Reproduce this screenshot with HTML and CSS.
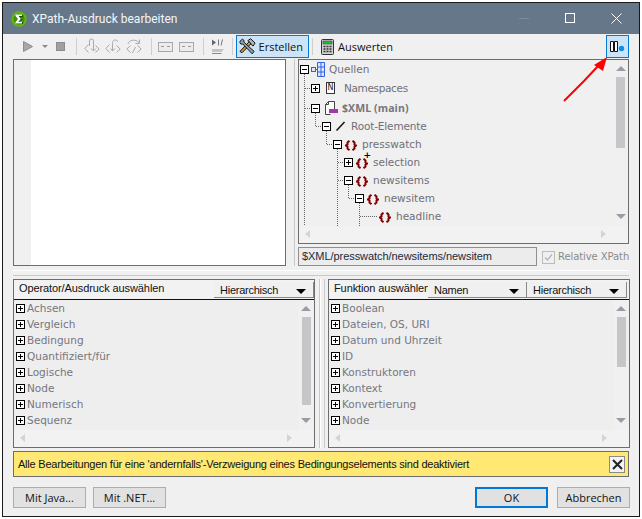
FILE: index.html
```html
<!DOCTYPE html>
<html lang="de">
<head>
<meta charset="utf-8">
<title>XPath-Ausdruck bearbeiten</title>
<link rel="stylesheet" href="styles.css">
</head>
<body>
<div class="window">
  <header class="titlebar">
    <svg class="logo" width="16" height="16" viewBox="0 0 16 16"><circle cx="8" cy="8" r="7.700" fill="#5fb80f"/><circle cx="8" cy="8" r="5.500" fill="#3f8f10"/><path d="M4.500 3.500h7v2H8.500l2 2.500-2.500 2.500h3.500v2h-7v-1.500L7.500 8 4.500 5z" fill="#1d4a08" transform="translate(.6 .4)"/><path d="M4.500 3.500h6.500v1.600H7.600l2.300 2.900-2.600 2.700H11v1.800H4.500v-1.300L7 8 4.500 5z" fill="#fff"/></svg>
    <span class="title">XPath-Ausdruck bearbeiten</span>
    <span class="wbtn"><svg width="11" height="11" viewBox="0 0 11 11"><path d="M0 5.500h10" stroke="#7d8b9c" fill="none"/></svg></span>
    <span class="wbtn"><svg width="11" height="11" viewBox="0 0 11 11"><rect x=".5" y=".5" width="9" height="9" fill="none" stroke="#fff"/></svg></span>
    <span class="wbtn"><svg width="11" height="11" viewBox="0 0 11 11"><path d="M.5.500l10 10M10.500.500l-10 10" stroke="#fff" fill="none"/></svg></span>
  </header>

  <div class="toolbar">
    <svg class="tb play" width="11" height="11" viewBox="0 0 11 11"><path d="M.5.500l9 5-9 5z" fill="#a8a8a8" stroke="#8d8d8d"/></svg>
    <svg class="tb caret" width="6" height="4" viewBox="0 0 6 4"><path d="M0 0h6L3 3z" fill="#8a8a8a"/></svg>
    <span class="stop"></span>
    <i class="sep s1"></i>
    <svg class="tb step" width="16" height="17" viewBox="0 0 16 17"><path d="M4.500 6.500L.8 10.500l3.700 4M11.500 7.500l3.700 3.500-3.700 3.500M5.500 8V3a2 2 0 0 1 4 0V12.500M7 10.500l2.500 2.500 2.500-2.500" fill="none" stroke="#a9a9a9"/></svg>
    <svg class="tb step" width="16" height="17" viewBox="0 0 16 17"><path d="M4.500 6.500L.8 10.500l3.700 4M11.500 7.500l3.700 3.500-3.700 3.500M13 3.500C10 .5 7.500 2 7.500 5.500V13M5.500 10.500l2 2.500 2.500-2.500" fill="none" stroke="#a9a9a9"/></svg>
    <svg class="tb step" width="16" height="17" viewBox="0 0 16 17"><path d="M4.500 7.500L.8 11l3.700 3.500M11.500 7.500l3.700 3.500-3.700 3.500M2 6C3 1.500 10 1 13 4.500M13.500 1.500V5.500H9.500M6.500 15l3-6" fill="none" stroke="#a9a9a9"/></svg>
    <i class="sep s2"></i>
    <span class="field-ic"><b></b></span>
    <span class="field-ic second"><b></b></span>
    <i class="sep s3"></i>
    <svg class="tb ppi" width="12" height="16" viewBox="0 0 12 16"><path d="M0 .5l4 3-4 3z" fill="#666"/><path d="M6.500 .5v6M10.500 .5l-1.500 6" stroke="#777" fill="none"/><path d="M0 10h12l-2.500 3H0z" fill="#c4c4c4"/><path d="M0 14.500h9.500" stroke="#8a8a8a"/></svg>
    <i class="sep s4"></i>
    <button class="tool active">
      <svg width="17" height="17" viewBox="0 0 17 17"><path d="M12.500 5.500L3 15l-2-1.500 9.500-10z" fill="#e08a2a" stroke="#111"/><path d="M9 2.500l3-2 4.500 4.500-2 3-1.500-1-1.500-2.500z" fill="#a9b6c2" stroke="#111"/><path d="M1.500 2.500l2-1.500 1.500 1v2L15.500 13.500 13.500 16 4 6H2L.800 4.500z" fill="#8fa0b0" stroke="#111"/></svg>
      Erstellen
    </button>
    <i class="sep s5"></i>
    <button class="tool plain">
      <svg width="13" height="16" viewBox="0 0 13 16"><rect x=".5" y=".5" width="12" height="15" rx="1" fill="#cfcfcf" stroke="#333"/><rect x="2" y="2" width="9" height="3" fill="#22c03a" stroke="#333" stroke-width=".5"/><path d="M2.500 7.500h2M5.500 7.500h2M8.500 7.500h2M2.500 10h2M5.500 10h2M8.500 10h2M2.500 12.500h2M5.500 12.500h2M8.500 12.500h2" stroke="#333" stroke-width="1.400"/></svg>
      Auswerten
    </button>
    <button class="toggle">
      <svg width="15" height="11" viewBox="0 0 15 11"><path d="M.5.500h3v10h-3zM4.500 .500h3v10h-3z" fill="#fff" stroke="#111"/><circle cx="11.500" cy="7.500" r="2.700" fill="#0f8fe0"/></svg>
    </button>
  </div>

  <section class="top">
    <div class="editor"><div class="gutter"></div><div class="code"></div></div>
    <div class="splitter-v"></div>
    <div class="right-col">
      <div class="tree-panel">
        <div class="tree-body">
          <svg class="tree-lines" width="100" height="166" viewBox="0 0 100 166">
            <path d="M5.500 14V166M6 28.500H12M6 48.500H12M16.500 53V66.500M17 66.500H23M27.500 71V84.500M28 84.500H34M38.500 89V166M39 102.500H45M39 120.500H45M49.500 125V138.500M50 138.500H56M60.500 143V166M61 156.500H78" fill="none" stroke="#666" stroke-dasharray="1 1"/>
          </svg>
          <div class="row d0"><span class="box minus"></span><svg class="ic" width="14" height="15" viewBox="0 0 14 15"><path d="M6.500.5h7v14h-7z" fill="#dbe6ff" stroke="#2f63e0"/><path d="M6.500 5h7M6.500 10h7M10 .5v14" stroke="#2f63e0"/><rect x=".5" y="5.500" width="4" height="4" fill="#dbe6ff" stroke="#2f63e0"/><path d="M4.500 7.500h2" stroke="#2f63e0"/></svg><span class="lbl q">Quellen</span></div>
          <div class="row d1 ns"><span class="box plus"></span><span class="n-ic">N</span><span class="lbl">Namespaces</span></div>
          <div class="row d1 xml"><span class="box minus"></span><svg class="ic" width="14" height="14" viewBox="0 0 14 14"><path d="M1.500 13.500V3.500L4.500.5h6v7.500M1.500 13.500h5" fill="#fff" stroke="#444"/><path d="M4.500.5v3h-3" fill="none" stroke="#444"/><rect x="5" y="8" width="9" height="4" fill="#a838a8"/></svg><span class="lbl strong">$XML (main)</span></div>
          <div class="row d2 rootel"><span class="box minus"></span><svg class="ic" width="10" height="10" viewBox="0 0 10 10"><path d="M.5 9.500l8-8.500" stroke="#111" stroke-width="1.500" fill="none"/></svg><span class="lbl">Root-Elemente</span></div>
          <div class="row d3"><span class="box minus"></span><span class="el"><svg width="12" height="11" viewBox="0 0 12 11"><use href="#brace"/></svg></span><span class="lbl">presswatch</span></div>
          <div class="row d4"><span class="box plus"></span><span class="el star"><svg width="12" height="11" viewBox="0 0 12 11"><use href="#brace"/></svg></span><span class="lbl">selection</span></div>
          <div class="row d4"><span class="box minus"></span><span class="el"><svg width="12" height="11" viewBox="0 0 12 11"><use href="#brace"/></svg></span><span class="lbl">newsitems</span></div>
          <div class="row d5"><span class="box minus"></span><span class="el"><svg width="12" height="11" viewBox="0 0 12 11"><use href="#brace"/></svg></span><span class="lbl">newsitem</span></div>
          <div class="row d6"><span class="el"><svg width="12" height="11" viewBox="0 0 12 11"><use href="#brace"/></svg></span><span class="lbl">headline</span></div>
        </div>
        <div class="vscroll tall"><i class="up"></i><b class="thumb t-tree"></b><i class="dn"></i></div>
        <div class="hscroll"><i class="lt"></i><i class="rt"></i></div>
      </div>
      <div class="path-row">
        <div class="path">$XML/presswatch/newsitems/newsitem</div>
        <span class="check"><svg width="11" height="11" viewBox="0 0 11 11"><path d="M2 5.500l2.500 2.500L9 2.500" fill="none" stroke="#b8b8b8" stroke-width="1.500"/></svg></span>
        <span class="rel">Relative XPath</span>
      </div>
    </div>
  </section>

  <div class="splitter-h"></div>

  <section class="pickers">
    <div class="picker">
      <div class="p-head"><span class="p-title">Operator/Ausdruck auswählen</span><span class="select hier">Hierarchisch<i></i></span></div>
      <div class="p-body">
        <ul class="list">
          <li><span class="box plus"></span>Achsen</li>
          <li><span class="box plus"></span>Vergleich</li>
          <li><span class="box plus"></span>Bedingung</li>
          <li><span class="box plus"></span>Quantifiziert/für</li>
          <li><span class="box plus"></span>Logische</li>
          <li><span class="box plus"></span>Node</li>
          <li><span class="box plus"></span>Numerisch</li>
          <li><span class="box plus"></span>Sequenz</li>
        </ul>
        <div class="vscroll"><i class="up"></i><b class="thumb t-op"></b><i class="dn"></i></div>
      </div>
      <div class="hscroll"><i class="lt"></i><i class="rt"></i></div>
    </div>
    <div class="splitter-v mid"></div>
    <div class="picker">
      <div class="p-head"><span class="p-title fn">Funktion auswählen</span><span class="select names">Namen<i></i></span><span class="select hier2">Hierarchisch<i></i></span></div>
      <div class="p-body">
        <ul class="list">
          <li><span class="box plus"></span>Boolean</li>
          <li><span class="box plus"></span>Dateien, OS, URI</li>
          <li><span class="box plus"></span>Datum und Uhrzeit</li>
          <li><span class="box plus"></span>ID</li>
          <li><span class="box plus"></span>Konstruktoren</li>
          <li><span class="box plus"></span>Kontext</li>
          <li><span class="box plus"></span>Konvertierung</li>
          <li><span class="box plus"></span>Node</li>
        </ul>
        <div class="vscroll"><i class="up"></i><b class="thumb t-fn"></b><i class="dn"></i></div>
      </div>
      <div class="hscroll"><i class="lt"></i><i class="rt"></i></div>
    </div>
  </section>

  <div class="notice">
    <span>Alle Bearbeitungen für eine 'andernfalls'-Verzweigung eines Bedingungselements sind deaktiviert</span>
    <span class="notice-x"><svg width="11" height="11" viewBox="0 0 11 11"><path d="M1 1l9 9M10 1l-9 9" stroke="#222" stroke-width="2" fill="none"/></svg></span>
  </div>

  <footer class="actions">
    <button class="btn">Mit Java...</button>
    <button class="btn">Mit .NET...</button>
    <span class="grow"></span>
    <button class="btn default">OK</button>
    <button class="btn">Abbrechen</button>
  </footer>

  <svg class="arrow" width="50" height="50" viewBox="0 0 50 50"><path d="M3 46L23 26L38 10" fill="none" stroke="#f00" stroke-width="2"/><path d="M46 2L33 10l9 6z" fill="#f00"/></svg>
</div>
<svg class="defs" width="0" height="0"><defs><g id="brace"><path d="M4.500.800L2.500 2.500v2L.8 5.500l1.700 1v2l2 1.700M7.500.800l2 1.700v2l1.700 1-1.700 1v2l-2 1.700" fill="none" stroke="#800000" stroke-width="2"/></g></defs></svg>
</body>
</html>
```
FILE: styles.css
```css
* { box-sizing: border-box; }
html, body { margin: 0; padding: 0; background: #fff; }
body { width: 642px; height: 519px; overflow: hidden; font-family: "Open Sans", "Liberation Sans", sans-serif; }
.defs { position: absolute; }
.window { position: relative; margin: 2px 0 0 2px; width: 638px; height: 515px; border: 1px solid #1a1a1a; background: #f0f0f0; display: flex; flex-direction: column; overflow: hidden; }

.titlebar { height: 31px; background: #67778a; display: flex; align-items: center; padding-left: 8px; color: #fff; flex: none; }
.logo { flex: none; }
.title { font: 12px/1 Roboto, sans-serif; margin-left: 5px; flex: 1; color: #f4f6f8; }
.wbtn { width: 46px; height: 31px; display: flex; align-items: center; justify-content: center; flex: none; }

.toolbar { height: 25px; display: flex; align-items: center; padding-left: 20px; flex: none; }
.tb { flex: none; }
.caret { margin-left: 8px; }
.stop { width: 9px; height: 9px; background: #a0a0a0; border: 1px solid #8c8c8c; margin-left: 8px; flex: none; }
.sep { width: 1px; height: 17px; background: #cfcfcf; flex: none; }
.s1 { margin: 0 7px 0 11px; }
.step { margin-right: 5px; }
.s2 { margin: 0 6px 0 4px; }
.field-ic { width: 15px; height: 10px; border: 1px solid #a8a8a8; background: #ececec; display: flex; align-items: center; justify-content: center; flex: none; }
.field-ic b { width: 9px; height: 0; border-top: 1px dashed #999; }
.second { margin-left: 6px; }
.s3 { margin: 0 8px 0 9px; }
.s4 { margin: 0 3px 0 8px; }
.tool { font: 11px/1 "Open Sans", sans-serif; color: #111; height: 23px; display: flex; align-items: center; gap: 3px; padding: 0 5px 0 2px; border: 1px solid transparent; background: none; flex: none; }
.tool.active { width: 73px; background: #cce4f7; border-color: #0a78d0; }
.tool.plain { padding-left: 3px; gap: 4px; margin-left: 4px; }
.s5 { margin: 0 0 0 3px; }
.toggle { margin-left: auto; margin-right: 10px; width: 23px; height: 23px; padding: 0; display: flex; align-items: center; justify-content: center; background: #cce4f7; border: 1px solid #0a78d0; flex: none; }

.top { display: flex; height: 207px; padding-left: 10px; flex: none; }
.editor { width: 273px; border: 1px solid #6d6d6d; background: #fff; display: flex; flex: none; }
.gutter { width: 17px; background: #f0f0f0; }
.code { flex: 1; }
.splitter-v { width: 12px; flex: none; background: linear-gradient(90deg, #f0f0f0 0 8px, #c9c9c9 8px 9px, #f0f0f0 9px); }
.right-col { width: 331px; display: flex; flex-direction: column; flex: none; }
.tree-panel { position: relative; height: 185px; border: 1px solid #6d6d6d; background: #f2f2f2; display: grid; grid-template-columns: 1fr 15px; grid-template-rows: 1fr 17px; flex: none; }
.tree-body { position: relative; overflow: hidden; background: #f0f0f0; }
.tree-lines { position: absolute; left: 0; top: 0; }
.row { position: relative; height: 18px; display: flex; align-items: center; font: 10.500px/18px "DejaVu Sans", sans-serif; color: #6f6f78; flex: none; }
.d0 { padding-left: 1px; }
.d1 { padding-left: 12px; }
.d2 { padding-left: 23px; }
.d3 { padding-left: 34px; }
.d4 { padding-left: 45px; }
.d5 { padding-left: 56px; }
.d6 { padding-left: 77px; }
.ns { margin-top: 1px; }
.xml { margin-top: 2px; }
.box { position: relative; width: 9px; height: 9px; border: 1px solid #000; background: #fff; flex: none; display: block; }
.box::before { content: ""; position: absolute; left: 1px; top: 3px; width: 5px; height: 1px; background: #000; }
.plus::after { content: ""; position: absolute; left: 3px; top: 1px; width: 1px; height: 5px; background: #000; }
.ic { margin-left: 2px; flex: none; }
.lbl { margin-left: 5px; white-space: nowrap; }
.q { margin-left: 4px; }
.ns .lbl { margin-left: 9px; letter-spacing: -.35px; }
.xml .ic { margin-left: 4px; }
.xml .lbl { margin-left: 4px; }
.strong { font: bold 10.500px/18px "Open Sans", sans-serif; letter-spacing: .1px; color: #75757d; }
.rootel .ic { margin-left: 5px; }
.rootel .lbl { letter-spacing: -.15px; }
.n-ic { width: 9px; height: 12px; margin-left: 6px; border: 1px solid #333; background: #fff; color: #222; font: 8px/10px "DejaVu Sans", sans-serif; text-align: center; flex: none; }
.el { position: relative; margin-left: 3px; width: 12px; height: 11px; display: block; flex: none; top: -1px; }
.star::after { content: "+"; position: absolute; right: -3px; top: -5px; font: bold 9px/9px "DejaVu Sans", sans-serif; color: #000; }

.vscroll { background: #f0f0f0; display: flex; flex-direction: column; align-items: center; position: relative; }
.tall { grid-row: 1; grid-column: 2; }
.thumb { display: block; width: 9px; background: #c6c6c9; position: absolute; top: 17px; }
.t-tree { height: 71px; }
.t-op { height: 88px; }
.t-fn { height: 50px; }
.up, .dn { width: 0; height: 0; border-left: 5px solid transparent; border-right: 5px solid transparent; position: absolute; }
.up { top: 6px; border-bottom: 5px solid #9b9ba6; }
.dn { bottom: 7px; border-top: 5px solid #9b9ba6; }
.hscroll { grid-column: 1 / 3; height: 17px; background: #f2f2f2; position: relative; flex: none; }
.tree-panel .hscroll { grid-row: 2; }
.lt, .rt { position: absolute; top: 4px; width: 0; height: 0; border-top: 4px solid transparent; border-bottom: 4px solid transparent; }
.lt { left: 6px; border-right: 5px solid #d4d4d4; }
.rt { right: 22px; border-left: 5px solid #d4d4d4; }

.path-row { display: flex; align-items: flex-start; height: 22px; flex: none; padding-top: 3px; }
.path { width: 239px; height: 19px; border: 1px solid #8f8f8f; background: #ececec; font: 11px/17px "Liberation Sans", sans-serif; letter-spacing: -.06px; color: #1a2a3a; padding-left: 3px; white-space: nowrap; flex: none; }
.check { width: 13px; height: 13px; margin: 4px 0 0 5px; border: 1px solid #bcbcbc; background: #f0f0f0; display: flex; align-items: center; justify-content: center; flex: none; }
.rel { font: 10px/1 "DejaVu Sans", sans-serif; margin: 5px 0 0 3px; color: #8a8a8a; white-space: nowrap; letter-spacing: -.08px; }

.splitter-h { height: 13px; margin: 0 10px; flex: none; background: linear-gradient(#f0f0f0 0 4px, #fff 4px 5px, #f0f0f0 5px 9px, #c9c9c9 9px 10px, #f0f0f0 10px); }

.pickers { display: flex; padding-left: 10px; height: 169px; flex: none; }
.picker { width: 302px; border: 1px solid #6d6d6d; flex: none; display: flex; flex-direction: column; background: #f2f2f2; }
.splitter-v.mid { width: 13px; background: linear-gradient(90deg, #f0f0f0 0 4px, #c9c9c9 4px 5px, #fff 5px 6px, #f0f0f0 6px 9px, #c9c9c9 9px 10px, #f0f0f0 10px); }
.p-head { height: 20px; display: flex; align-items: flex-start; border-bottom: 1px solid #111; font: 11px/1 "Liberation Sans", sans-serif; color: #111; flex: none; padding-left: 5px; position: relative; }
.p-title { margin-top: 3px; letter-spacing: -.1px; white-space: nowrap; flex: 1; }
.p-title.fn { flex: none; width: 94px; }
.select { position: relative; display: block; height: 16px; margin-top: 2px; background: #f0f0f0; border-bottom: 1px solid #888; border-right: 1px solid #888; padding: 3px 0 0 6px; white-space: nowrap; flex: none; letter-spacing: -.25px; }
.select i { position: absolute; right: 7px; top: 7px; width: 0; height: 0; border-left: 5px solid transparent; border-right: 5px solid transparent; border-top: 5px solid #000; }
.hier { width: 100px; }
.names { width: 99px; }
.hier2 { width: 100px; }
.p-body { flex: 1; display: flex; min-height: 0; }
.list { list-style: none; margin: 0; padding: 0; flex: 1; background: #eeeeee; font: 10.500px/16px "DejaVu Sans", sans-serif; color: #76767e; }
.list li { height: 16px; display: flex; align-items: center; gap: 2px; padding-left: 2px; }
.p-body .vscroll { width: 16px; flex: none; }

.notice { margin: 3px 10px 0; height: 26px; background: #ffe873; border: 1px solid #6d6d6d; display: flex; align-items: center; justify-content: space-between; padding: 0 3px 0 4px; font: 11px/1 "Liberation Sans", sans-serif; color: #111; flex: none; letter-spacing: -.22px; }
.notice-x { width: 16px; height: 17px; background: #f4f4f4; border: 1px solid #8a8a8a; display: flex; align-items: center; justify-content: center; flex: none; }

.actions { display: flex; gap: 7px; padding: 10px 9px 0 10px; flex: none; }
.grow { flex: 1; }
.btn { width: 73px; height: 21px; padding: 0; background: #e1e1e1; border: 1px solid #adadad; font: 11px/1 "Open Sans", sans-serif; color: #111; }
.default { border: 2px solid #0078d7; margin-right: 2px; }

.arrow { position: absolute; left: 558px; top: 52px; pointer-events: none; }
```
